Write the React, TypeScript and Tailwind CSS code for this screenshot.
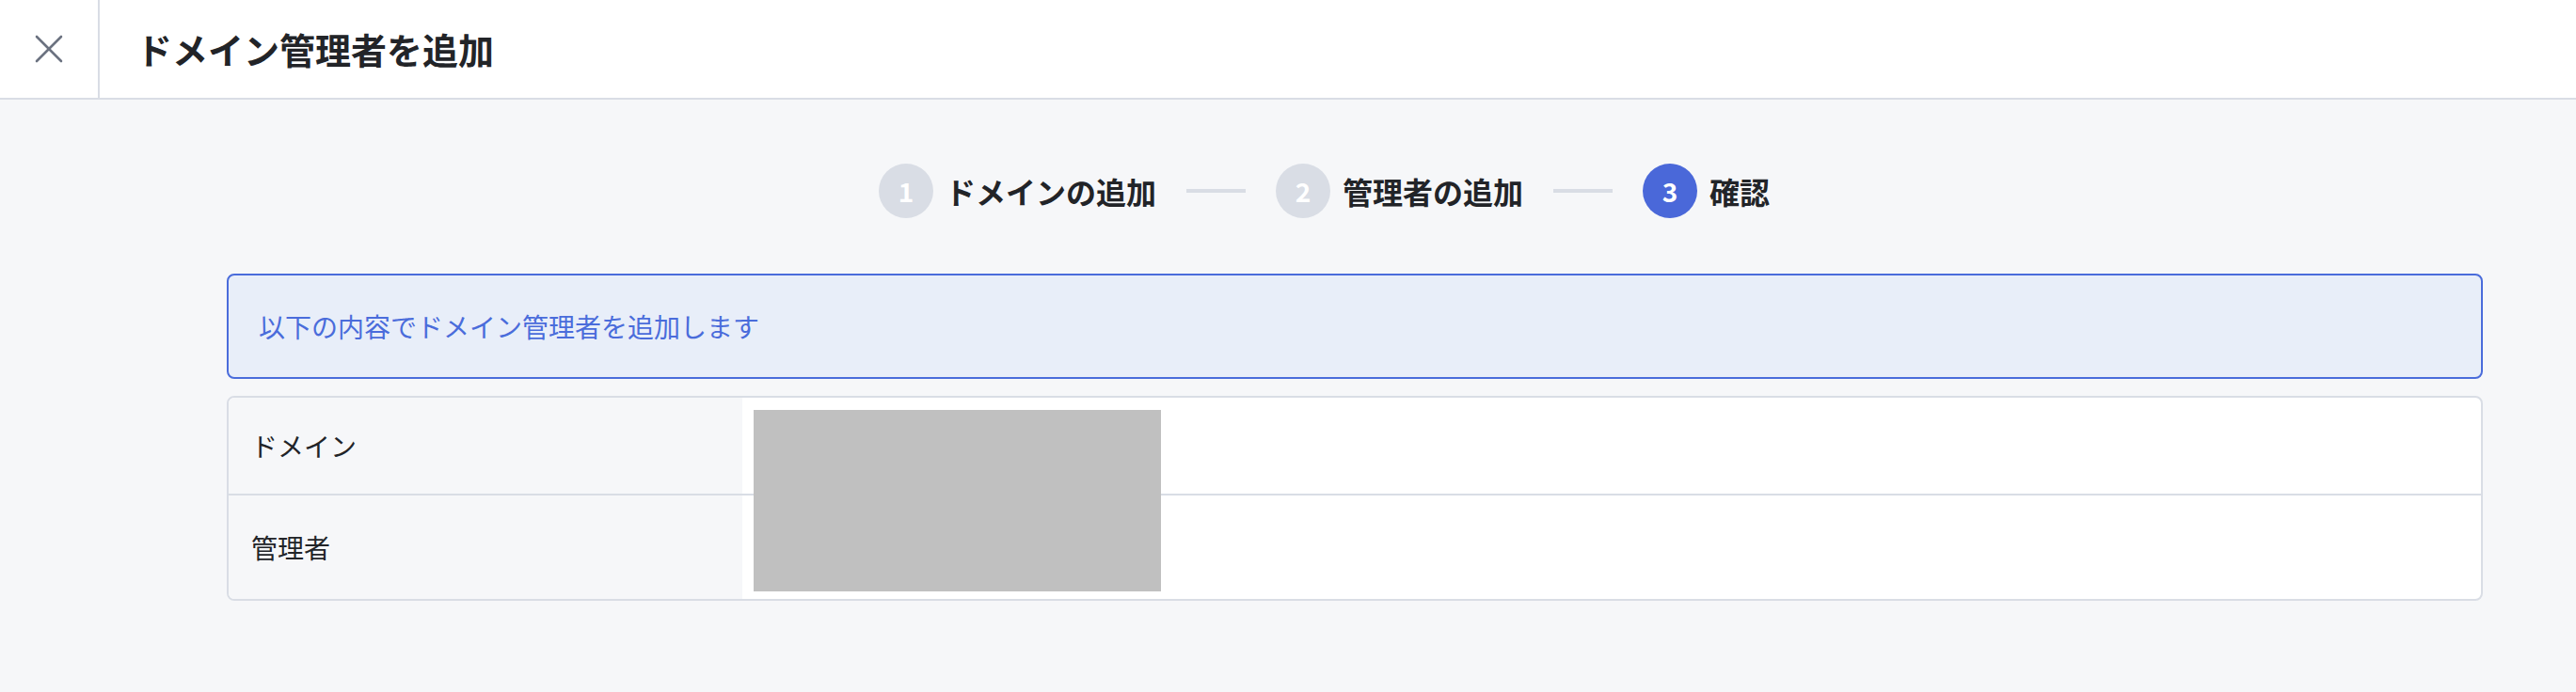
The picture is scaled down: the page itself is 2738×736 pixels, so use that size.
const steps = [
  { no: 1, label: "ドメインの追加", active: false },
  { no: 2, label: "管理者の追加", active: false },
  { no: 3, label: "確認", active: true },
];

export default function App() {
  return (
    <div className="min-h-screen bg-[#f6f7f9] text-[#222428] font-['Noto_Sans_CJK_JP','Noto_Sans',sans-serif]">
      {/* Header */}
      <header className="flex h-[106px] bg-white border-b-2 border-[#d9dde5]">
        <button className="w-[106px] flex items-center justify-center border-r-2 border-[#d9dde5]">
          <svg width="30" height="30" viewBox="0 0 30 30" fill="none" stroke="#6b7280" strokeWidth="2.6" strokeLinecap="round">
            <line x1="2" y1="2" x2="28" y2="28" />
            <line x1="28" y1="2" x2="2" y2="28" />
          </svg>
        </button>
        <h1 className="flex items-center pl-[39px] text-[38px] font-bold leading-none">ドメイン管理者を追加</h1>
      </header>

      <main className="pl-[241px] pr-[99px] pb-[95px]">
        {/* Stepper */}
        <div className="flex items-center justify-center gap-[32px] pt-[68px] pr-[65px]">
          {steps.map((s, i) => (
            <div key={s.no} className="flex items-center gap-[32px]">
              {i > 0 && <div className="w-[63px] h-[4px] bg-[#d9dde5]" />}
              <div className="flex items-center gap-[13px]">
                <div className={`w-[58px] h-[58px] rounded-full flex items-center justify-center text-white text-[28px] font-bold ${s.active ? "bg-[#4a68d9]" : "bg-[#d9dde5]"}`}>
                  {s.no}
                </div>
                <span className="text-[32px] font-bold leading-none">{s.label}</span>
              </div>
            </div>
          ))}
        </div>

        {/* Info */}
        <div className="mt-[59px] h-[112px] flex items-center px-[32px] rounded-[8px] border-2 border-[#4a6cdb] bg-[#e8eef9] text-[#4a6cdb] text-[28px]">
          以下の内容でドメイン管理者を追加します
        </div>

        {/* Table */}
        <div className="relative mt-[18px] rounded-[8px] border-2 border-[#d9dde5] bg-white overflow-hidden text-[28px]">
          <div className="grid grid-cols-[546px_1fr] h-[104px] border-b-2 border-[#d9dde5]">
            <div className="flex items-center pl-[24px] bg-[#f6f7f9]">ドメイン</div>
            <div />
          </div>
          <div className="grid grid-cols-[546px_1fr] h-[110px]">
            <div className="flex items-center pl-[24px] bg-[#f6f7f9]">管理者</div>
            <div />
          </div>
          <div className="absolute left-[558px] top-[13px] w-[433px] h-[193px] bg-[#c0c0c0]" />
        </div>
      </main>
    </div>
  );
}
